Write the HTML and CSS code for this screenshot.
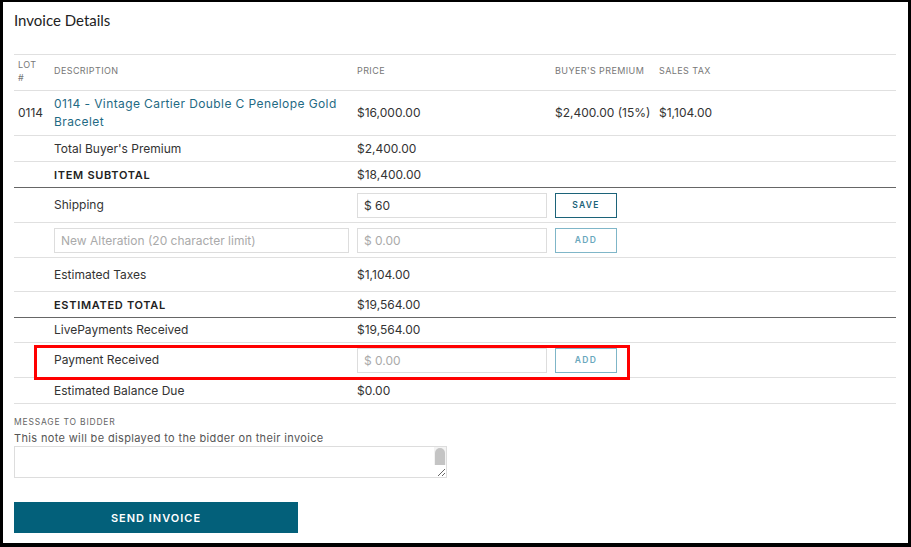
FILE: index.html
```html
<!DOCTYPE html>
<html>
  <head>
    <title>Invoice Details</title>
    <link rel="stylesheet" href="styles.css">
  </head>
  <body>
    <div class="panel">
      <h1 class="title">Invoice Details</h1>
      <table class="invoice">
        <colgroup>
          <col class="col-lot">
          <col class="col-desc">
          <col class="col-price">
          <col class="col-bp">
          <col>
        </colgroup>
        <thead>
          <tr>
            <th>LOT<br>#</th>
            <th>DESCRIPTION</th>
            <th>PRICE</th>
            <th>BUYER'S PREMIUM</th>
            <th>SALES TAX</th>
          </tr>
        </thead>
        <tbody>
          <tr class="item">
            <td>0114</td>
            <td><a href="#" class="lot-link">0114 - Vintage Cartier Double C Penelope Gold Bracelet</a></td>
            <td>$16,000.00</td>
            <td>$2,400.00 (15%)</td>
            <td>$1,104.00</td>
          </tr>
          <tr class="line">
            <td></td>
            <td>Total Buyer's Premium</td>
            <td>$2,400.00</td>
            <td></td><td></td>
          </tr>
          <tr class="line strong">
            <td></td>
            <td>ITEM SUBTOTAL</td>
            <td>$18,400.00</td>
            <td></td><td></td>
          </tr>
          <tr class="line form">
            <td></td>
            <td>Shipping</td>
            <td><input class="field" type="text" value="$ 60"></td>
            <td><button class="btn btn-dark">SAVE</button></td>
            <td></td>
          </tr>
          <tr class="line form">
            <td></td>
            <td><input class="field" type="text" placeholder="New Alteration (20 character limit)"></td>
            <td><input class="field" type="text" placeholder="$ 0.00"></td>
            <td><button class="btn">ADD</button></td>
            <td></td>
          </tr>
          <tr class="line form-h">
            <td></td>
            <td>Estimated Taxes</td>
            <td>$1,104.00</td>
            <td></td><td></td>
          </tr>
          <tr class="line strong">
            <td></td>
            <td>ESTIMATED TOTAL</td>
            <td>$19,564.00</td>
            <td></td><td></td>
          </tr>
          <tr class="line short">
            <td></td>
            <td>LivePayments Received</td>
            <td>$19,564.00</td>
            <td></td><td></td>
          </tr>
          <tr class="line form">
            <td></td>
            <td>Payment Received</td>
            <td><input class="field" type="text" placeholder="$ 0.00"></td>
            <td><button class="btn">ADD</button></td>
            <td></td>
          </tr>
          <tr class="line">
            <td></td>
            <td>Estimated Balance Due</td>
            <td>$0.00</td>
            <td></td><td></td>
          </tr>
        </tbody>
      </table>
      <div class="highlight"></div>

      <div class="message">
        <label class="message-label">MESSAGE TO BIDDER</label>
        <p class="message-note">This note will be displayed to the bidder on their invoice</p>
        <div class="message-wrap">
          <textarea class="message-box"></textarea>
          <span class="scroll-track"><span class="scroll-thumb"></span></span>
        </div>
      </div>

      <button class="send-btn">SEND INVOICE</button>
    </div>
  </body>
</html>
```

FILE: styles.css
```css
* {
  margin: 0;
  padding: 0;
  box-sizing: border-box;
}

html, body {
  height: 100%;
  overflow: hidden;
}

body {
  background: #000000;
  padding: 2px 3px 4px 3px;
  font-family: 'Inter', 'Liberation Sans', sans-serif;
  color: #333333;
}

.panel {
  position: relative;
  background: #ffffff;
  height: 541px;
  padding: 8px 11px 0 11px;
}

.title {
  font-family: 'Lato', 'Open Sans', sans-serif;
  font-weight: 400;
  font-size: 15px;
  line-height: 20px;
  color: #222222;
  margin-bottom: 24px;
}

.invoice {
  width: 882px;
  border-collapse: collapse;
  font-size: 12px;
}

.col-lot { width: 36px; }
.col-desc { width: 303px; }
.col-price { width: 198px; }
.col-bp { width: 104px; }

.invoice th {
  text-align: left;
  font-weight: 400;
  font-size: 9px;
  letter-spacing: 0.4px;
  color: #777777;
  line-height: 13px;
  padding: 0 4px 4px 4px;
  height: 36px;
  border-top: 1px solid #e0e0e0;
  border-bottom: 1px solid #e0e0e0;
  vertical-align: middle;
}

.invoice td {
  padding: 0 4px;
  vertical-align: middle;
  border-bottom: 1px solid #e0e0e0;
  line-height: 18px;
}

.item td {
  height: 45px;
}

.lot-link {
  color: #1f6a84;
  text-decoration: none;
  letter-spacing: 0.4px;
}

.line td {
  height: 26px;
}

.line.form td {
  height: 35px;
}

.line.form-h td {
  height: 34px;
}

.line.short td {
  height: 25px;
}

.strong td:nth-child(2) {
  font-weight: 600;
  font-size: 11px;
  letter-spacing: 0.7px;
  color: #222222;
}

.strong td {
  border-bottom: 1px solid #666666;
}

.field {
  display: block;
  width: 100%;
  height: 25px;
  border: 1px solid #dddddd;
  padding: 0 6px;
  font-family: 'Inter', 'Liberation Sans', sans-serif;
  font-size: 12px;
  color: #333333;
  outline: none;
}

.field::placeholder {
  color: #aaaaaa;
}

.btn {
  display: block;
  width: 62px;
  height: 25px;
  background: #ffffff;
  border: 1px solid #7fb6c8;
  color: #6aa8bd;
  font-family: 'Inter', 'Liberation Sans', sans-serif;
  font-size: 8.5px;
  font-weight: 600;
  letter-spacing: 1.3px;
  cursor: pointer;
}

.btn-dark {
  border-color: #1c6379;
  color: #1c6379;
}

.highlight {
  position: absolute;
  left: 31px;
  top: 343px;
  width: 596px;
  height: 35px;
  border: 3px solid #ff0000;
  pointer-events: none;
}

.message {
  margin-top: 12px;
}

.message-label {
  display: block;
  font-size: 8.5px;
  letter-spacing: 0.8px;
  color: #666666;
  line-height: 12px;
}

.message-note {
  font-size: 11px;
  letter-spacing: 0.35px;
  color: #555555;
  line-height: 16px;
  margin-top: 2px;
}

.message-wrap {
  position: relative;
  width: 433px;
  height: 32px;
}

.message-box {
  display: block;
  width: 100%;
  height: 100%;
  border: 1px solid #dddddd;
  overflow: hidden;
  resize: both;
  outline: none;
  font-size: 12px;
}

/* fake scrollbar drawn over the textarea, above the resize corner */
.scroll-track {
  position: absolute;
  right: 1px;
  top: 1px;
  width: 12px;
  height: 18px;
  background: #f3f3f3;
  padding: 1px 1px 0 1px;
}

.scroll-thumb {
  display: block;
  width: 10px;
  height: 17px;
  background: #c4c4c4;
  border-radius: 5px 5px 0 0;
}

.send-btn {
  display: block;
  margin-top: 24px;
  width: 284px;
  height: 31px;
  background: #03607a;
  border: none;
  color: #ffffff;
  font-family: 'Inter', 'Liberation Sans', sans-serif;
  font-size: 11px;
  font-weight: 600;
  letter-spacing: 1px;
  cursor: pointer;
}
```
